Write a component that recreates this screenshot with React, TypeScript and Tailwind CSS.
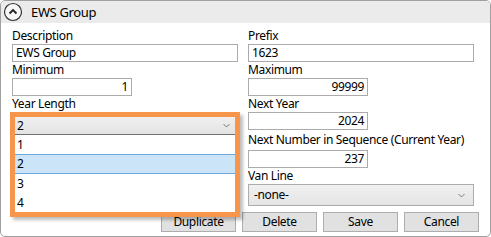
import React from "react";

const Label = ({ children, tall }: { children: React.ReactNode; tall?: boolean }) => (
  <div className={`${tall ? "h-[20px] pt-[2px]" : "h-[16px]"} text-[12px] leading-[16px] text-black whitespace-nowrap`}>{children}</div>
);

const Field = ({ value, right, width }: { value: string; right?: boolean; width?: string }) => (
  <div
    className={`${width ?? "w-full"} h-[18px] border border-[#ababab] bg-white px-[3px] text-[12px] leading-[16px] text-black ${
      right ? "text-right" : "text-left"
    }`}
  >
    {value}
  </div>
);

const Chevron = () => (
  <svg width="7" height="5" viewBox="0 0 7 5" className="shrink-0">
    <path d="M0.5 1 L3.5 4 L6.5 1" fill="none" stroke="#7a7a7a" strokeWidth="1" />
  </svg>
);

const Btn = ({ label }: { label: string }) => (
  <button className="w-[75px] h-[20px] border border-[#adadad] bg-[#e1e1e1] text-[12px] leading-[18px] text-black">
    {label}
  </button>
);

export default function App() {
  return (
    <div className="w-[491px] h-[237px] bg-white font-['Segoe_UI','Noto_Sans',sans-serif] tracking-[-0.35px]">
      <div className="w-[491px] h-[237px] border border-[#a0a0a0] rounded-[5px] overflow-hidden flex flex-col">
        {/* Header */}
        <div className="h-[22px] bg-[#ebebeb] flex items-center pl-[2px] gap-[8px]">
          <svg width="20" height="20" viewBox="0 0 20 20">
            <circle cx="10" cy="10" r="8.5" fill="#f7f7f7" stroke="#333" strokeWidth="1.2" />
            <path d="M6.5 11.5 L10 8 L13.5 11.5" fill="none" stroke="#222" strokeWidth="1.8" />
          </svg>
          <span className="text-[13px] leading-[16px] text-black">EWS Group</span>
        </div>

        {/* Body */}
        <div className="pl-[11px] pr-[11px] pt-[5px] flex flex-col">
          <div className="grid grid-cols-[226px_226px] gap-x-[10px]">
            {/* Left column */}
            <div className="flex flex-col">
              <Label>Description</Label>
              <Field value="EWS Group" />
              <Label>Minimum</Label>
              <Field value="1" right width="w-[120px]" />
              <Label>Year Length</Label>
              <div className="relative h-[18px]">
                <div className="absolute -left-[2px] top-0 w-[230px] h-[105px] border-[5px] border-[#f7964a] bg-white shadow-[3px_3px_3px_rgba(0,0,0,0.25)] z-10 flex flex-col">
                  <div className="h-[18px] shrink-0 bg-gradient-to-b from-[#f0f0f0] to-[#e3e3e3] border-b border-[#707070] flex items-center justify-between pl-[2px] pr-[5px] text-[12px] leading-[16px] text-black">
                    <span>2</span>
                    <Chevron />
                  </div>
                  <div className="h-[20px] pl-[2px] flex items-center text-[12px] text-black">1</div>
                  <div className="h-[20px] pl-[2px] flex items-center text-[12px] text-black bg-[#cce4f7] border-y border-[#6aa8e0]">2</div>
                  <div className="h-[20px] pl-[2px] flex items-center text-[12px] text-black">3</div>
                  <div className="h-[20px] pl-[2px] flex items-center text-[12px] text-black">4</div>
                </div>
              </div>
            </div>

            {/* Right column */}
            <div className="flex flex-col">
              <Label>Prefix</Label>
              <Field value="1623" />
              <Label>Maximum</Label>
              <Field value="99999" right width="w-[120px]" />
              <Label>Next Year</Label>
              <Field value="2024" right width="w-[120px]" />
              <Label tall>Next Number in Sequence (Current Year)</Label>
              <Field value="237" right width="w-[120px]" />
              <Label>Van Line</Label>
              <div className="h-[22px] border border-[#acacac] bg-gradient-to-b from-[#f0f0f0] to-[#e5e5e5] flex items-center justify-between pl-[5px] pr-[8px] text-[12px] text-black">
                <span>-none-</span>
                <Chevron />
              </div>
            </div>
          </div>

          {/* Buttons */}
          <div className="mt-[6px] flex justify-end gap-[6px]">
            <Btn label="Duplicate" />
            <Btn label="Delete" />
            <Btn label="Save" />
            <Btn label="Cancel" />
          </div>
        </div>
      </div>
    </div>
  );
}
